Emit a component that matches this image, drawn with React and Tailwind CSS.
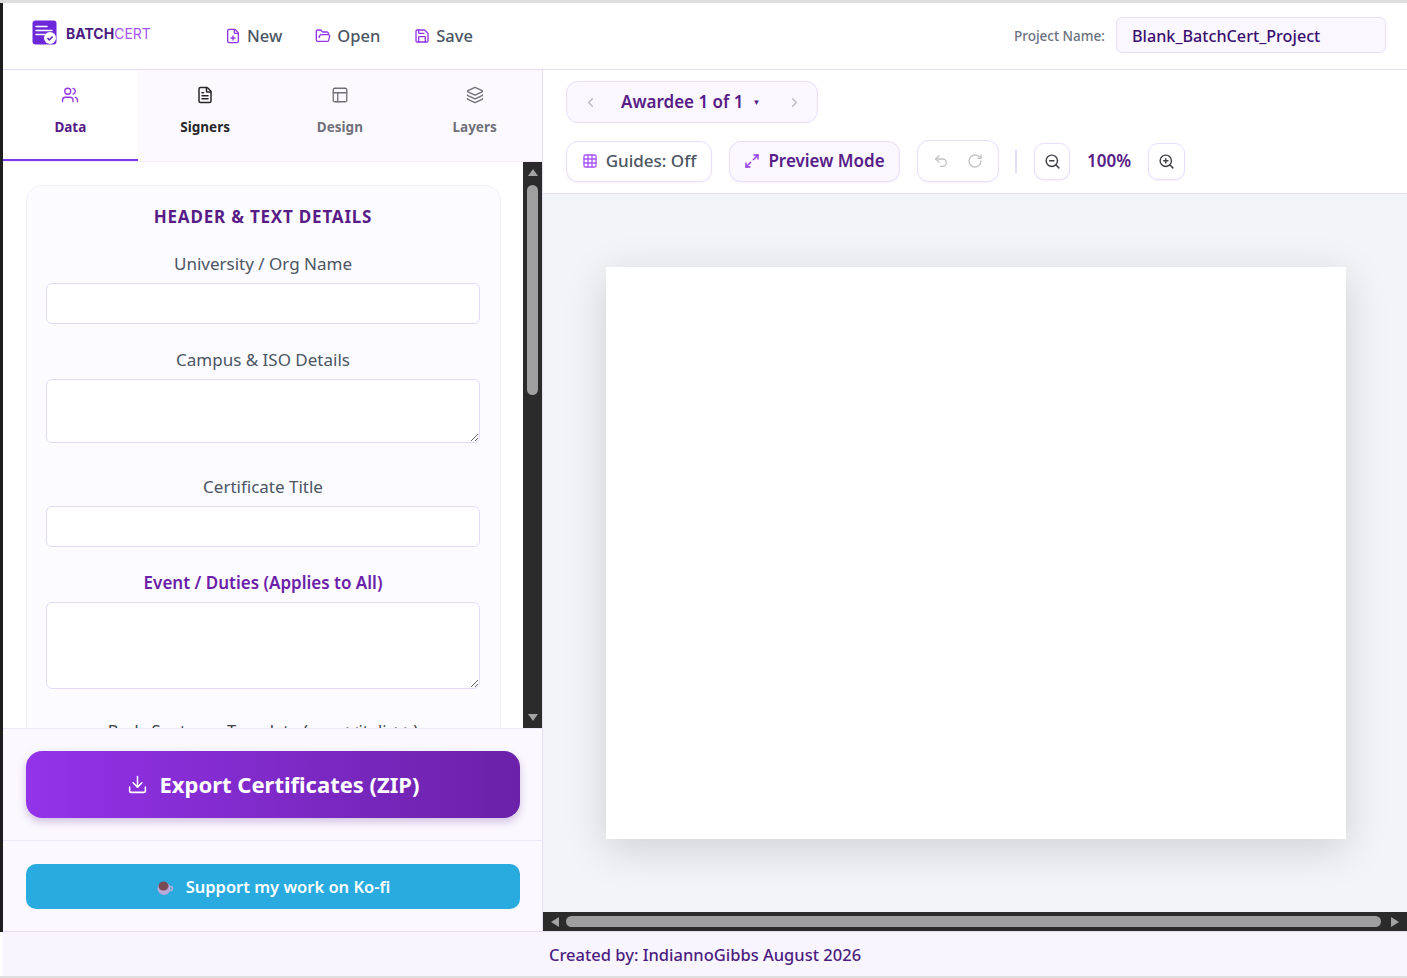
import { ChevronLeft, ChevronRight, Download, FilePlus, FileText, FolderOpen, Grid3x3, Layers, Maximize2, PanelsTopLeft, RotateCw, Save, Undo2, Users, ZoomIn, ZoomOut } from "lucide-react";

function Logo() {
    return (
        <svg width="26" height="26" viewBox="0 0 26 26" className="shrink-0">
            <rect x="0.5" y="0.5" width="24" height="24" rx="3" fill="#6d28d9" />
            <path d="M4 6.5h11M4 10.5h16M4 14.5h9" stroke="#fff" strokeWidth="1.5" strokeLinecap="round" />
            <circle cx="18" cy="18" r="6" fill="#fff" />
            <path d="M15.4 18l1.9 1.9 3.3-3.5" fill="none" stroke="#5b21b6" strokeWidth="1.5" />
        </svg>
    );
}

function ScrollArrow({ points, className }) {
    return (
        <svg width="10" height="10" viewBox="0 0 10 10" className={className}>
            <polygon points={points} fill="#a3a3a3" />
        </svg>
    );
}

function NavButton({ icon: Icon, label, className }) {
    return (
        <button className={"flex items-center gap-[6px] text-[16.5px] font-medium text-[#4b5563] " + className}>
            <Icon size={16} className="text-[#9333ea]" />
            {label}
        </button>
    );
}

function Tab({ icon: Icon, label, active, stroke = 1.75, className }) {
    return (
        <div className={"flex-1 flex flex-col items-center pt-[15px] h-[90px] border-b-2 " + (active ? "bg-white border-[#7c3aed]" : "border-transparent")}>
            <Icon size={18} className={active ? "text-[#9333ea]" : className} strokeWidth={stroke} />
            <span className={"mt-[13px] text-[13.5px] font-bold " + (active ? "text-[#581c87]" : className)}>{label}</span>
        </div>
    );
}

function Field({ label, area, mb = "mb-[25px]", purple }) {
    return (
        <div className={mb}>
            <label className={"block text-center text-[17px] leading-[22px] mb-[8px] " + (purple ? "font-semibold text-[#6b21a8]" : "text-[#4b5563]")}>{label}</label>
            {area ? (
                <textarea className={"block w-full bg-white border border-[#e4daf8] rounded-[6px] outline-none " + area} />
            ) : (
                <input className="block w-full h-[41px] bg-white border border-[#e4daf8] rounded-[6px] outline-none" />
            )}
        </div>
    );
}

export default function App() {
    return (
        <div className="w-[1407px] h-[978px] overflow-hidden flex flex-col bg-white font-['Noto_Sans',sans-serif]">
            <div className="h-[3px] bg-[#dedede] shrink-0" />

            <div className="flex-1 flex min-h-0">
                <div className="w-[3px] h-[929px] bg-[#1e1e1e] shrink-0" />

                <div className="flex-1 flex flex-col min-w-0">
                    {/* top bar */}
                    <header className="h-[67px] shrink-0 flex items-center border-b border-[#e5dcf8] bg-white">
                        <div className="flex items-center gap-[8px] ml-[29px] w-[193px] -mt-[6px]">
                            <Logo />
                            <span className="text-[14px] font-['Inter',sans-serif] text-[#a855f7]"><b className="font-bold text-[#4c1d7f]">BATCH</b>CERT</span>
                        </div>
                        <NavButton icon={FilePlus} label="New" />
                        <NavButton icon={FolderOpen} label="Open" className="ml-[33px]" />
                        <NavButton icon={Save} label="Save" className="ml-[34px]" />
                        <div className="ml-auto flex items-center gap-[11px] mr-[21px]">
                            <span className="text-[13.5px] font-medium text-[#6b7280]">Project Name:</span>
                            <input readOnly value="Blank_BatchCert_Project" className="w-[270px] h-[36px] mb-[2px] px-[15px] pt-[2px] rounded-[6px] border border-[#e9e0fb] bg-[#faf7ff] text-[16.2px] font-medium text-[#3b0f6f] outline-none" />
                        </div>
                    </header>

                    <div className="flex-1 flex min-h-0">
                        {/* sidebar */}
                        <aside className="w-[540px] shrink-0 flex flex-col border-r border-[#e5dcf8] bg-white">
                            <div className="flex bg-[#fcfaff] shrink-0 h-[92px] pt-[1px] border-b border-[#f1ebfb]">
                                <Tab icon={Users} label="Data" active />
                                <Tab icon={FileText} label="Signers" stroke={2} className="text-[#27272a]" />
                                <Tab icon={PanelsTopLeft} label="Design" className="text-[#71717a]" />
                                <Tab icon={Layers} label="Layers" className="text-[#71717a]" />
                            </div>

                            <div className="flex-1 flex min-h-0">
                                <div className="flex-1 min-w-0 overflow-hidden px-[23px] pt-[23px]">
                                    <div className="w-[475px] bg-[#fcfbff] border border-[#f3eefc] rounded-[16px] pl-[19px] pr-[20px] pt-[20px]">
                                        <h2 className="text-center text-[17px] leading-[22px] font-bold tracking-[0.8px] text-[#581c87] mb-[25px]">HEADER &amp; TEXT DETAILS</h2>
                                        <Field label="University / Org Name" />
                                        <Field label="Campus &amp; ISO Details" area="h-[64px]" mb="mb-[33px]" />
                                        <Field label="Certificate Title" />
                                        <Field label="Event / Duties (Applies to All)" area="h-[87px]" mb="mb-[31px]" purple />
                                        <label className="block text-center text-[16.5px] leading-[22px] text-[#3f3f46]">Body Sentence Template (use &lt;&lt;italic&gt;&gt;)</label>
                                    </div>
                                </div>
                                <div className="w-[19px] shrink-0 bg-[#2b2b2b] flex flex-col items-center pt-[6px] pb-[6px]">
                                    <ScrollArrow points="5,1 10,8 0,8" />
                                    <div className="w-[11px] h-[210px] mt-[7px] rounded-full bg-[#9f9f9f]" />
                                    <ScrollArrow points="0,2 10,2 5,9" className="mt-auto" />
                                </div>
                            </div>

                            <div className="h-[112px] shrink-0 border-t border-[#ece6fa] bg-[#fbf9ff] pl-[23px] pr-[22px] pt-[22px]">
                                <button className="w-full h-[67px] rounded-[16px] bg-gradient-to-r from-[#9333ea] to-[#6b21a8] shadow-[0_4px_8px_rgba(88,28,135,0.25)] flex items-center justify-center gap-[12px] text-white text-[22px] font-bold">
                                    <Download size={21} strokeWidth={1.75} />
                                    Export Certificates (ZIP)
                                </button>
                            </div>
                            <div className="h-[92px] shrink-0 border-t border-b border-t-[#ece6fa] border-b-[#e5dcf8] bg-[#fbf9ff] pl-[23px] pr-[22px] pt-[23px]">
                                <button className="w-full h-[45px] pt-[1px] rounded-[10px] bg-[#29abe0] flex items-center justify-center gap-[13px] text-white text-[16.5px] font-semibold">
                                    <svg width="17" height="17" viewBox="0 0 17 17">
                                        <circle cx="8" cy="9.5" r="6.5" fill="#b9a9d8" />
                                        <path d="M13 7.5h1.5a2 2 0 0 1 0 4H13" fill="none" stroke="#b9a9d8" strokeWidth="1.5" />
                                        <ellipse cx="7.5" cy="7" rx="5" ry="4.5" fill="#7a4a55" />
                                    </svg>
                                    Support my work on Ko-fi
                                </button>
                            </div>
                        </aside>

                        {/* preview */}
                        <main className="flex-1 min-w-0 flex flex-col border-b border-[#e5dcf8]">
                            <div className="h-[124px] shrink-0 border-b border-[#e5dcf8] bg-white pl-[23px] pt-[11px]">
                                <div className="w-[252px] h-[42px] flex items-center rounded-[12px] border border-[#e9defc] bg-[#faf7ff]">
                                    <ChevronLeft size={15} className="ml-[16px] text-[#b8b8c0]" />
                                    <span className="ml-[23px] text-[17px] font-semibold text-[#581c87]">Awardee 1 of 1</span>
                                    <span className="ml-[9px] text-[8px] text-[#581c87]">▼</span>
                                    <ChevronRight size={15} className="ml-auto mr-[15px] text-[#b8b8c0]" />
                                </div>
                                <div className="flex items-center mt-[17px]">
                                    <button className="w-[146px] h-[41px] flex items-center justify-center gap-[8px] rounded-[12px] border border-[#e9defc] bg-white text-[17px] font-medium text-[#4b5563] shadow-[0_1px_2px_rgba(88,28,135,0.06)]">
                                        <Grid3x3 size={16} className="text-[#a855f7]" />
                                        Guides: Off
                                    </button>
                                    <button className="ml-[17px] w-[171px] h-[41px] flex items-center justify-center gap-[8px] rounded-[12px] border border-[#e9defc] bg-[#faf7ff] text-[17px] font-semibold text-[#581c87] shadow-[0_1px_2px_rgba(88,28,135,0.06)]">
                                        <Maximize2 size={16} className="text-[#9333ea]" />
                                        Preview Mode
                                    </button>
                                    <div className="ml-[17px] w-[82px] h-[42px] flex items-center justify-center gap-[18px] rounded-[12px] border border-[#e9defc] bg-white shadow-[0_1px_2px_rgba(88,28,135,0.06)] text-[#c4c4c4]">
                                        <Undo2 size={16} />
                                        <RotateCw size={16} />
                                    </div>
                                    <div className="ml-[16px] w-[2px] h-[23px] bg-[#e5dcf8]" />
                                    <button className="ml-[17px] w-[36px] h-[37px] flex items-center justify-center rounded-[10px] border border-[#e9defc] bg-white shadow-[0_1px_2px_rgba(88,28,135,0.06)] text-[#3f3f46]">
                                        <ZoomOut size={17} />
                                    </button>
                                    <span className="w-[78px] text-center text-[17px] font-semibold text-[#581c87]">100%</span>
                                    <button className="w-[37px] h-[37px] flex items-center justify-center rounded-[10px] border border-[#e9defc] bg-white shadow-[0_1px_2px_rgba(88,28,135,0.06)] text-[#3f3f46]">
                                        <ZoomIn size={17} />
                                    </button>
                                </div>
                            </div>

                            <div className="flex-1 min-h-0 bg-[#f3f4f8] pl-[63px] pt-[73px]">
                                <div className="w-[740px] h-[572px] bg-white shadow-[0_10px_40px_rgba(0,0,0,0.15)]" />
                            </div>

                            <div className="h-[19px] shrink-0 bg-[#2b2b2b] flex items-center px-[7px]">
                                <ScrollArrow points="9,0 9,10 1,5" />
                                <div className="ml-[6px] w-[815px] h-[11px] rounded-full bg-[#9f9f9f]" />
                                <ScrollArrow points="1,0 1,10 9,5" className="ml-auto" />
                            </div>
                        </main>
                    </div>

                    <footer className="h-[44px] shrink-0 pt-[2px] flex items-center justify-center bg-[#f9f5ff] text-[16.5px] font-medium text-[#4c1d7f]">
                        Created by: IndiannoGibbs August 2026
                    </footer>
                </div>
            </div>

            <div className="h-[2px] bg-[#dedede] shrink-0" />
        </div>
    );
}
